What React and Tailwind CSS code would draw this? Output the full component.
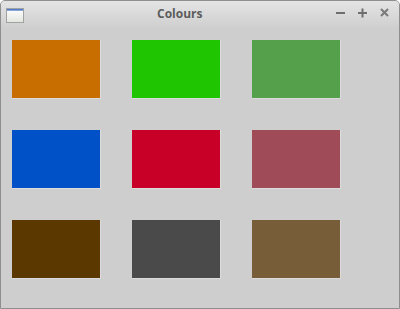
export default function App() {
  const colors = [
    "#c86e00", "#1ec500", "#55a04a",
    "#0050c8", "#c80028", "#a04b58",
    "#5a3800", "#4a4a4a", "#785e38",
  ];
  return (
    <div className="w-[400px] h-[309px] bg-[#cecece] border border-[#8e8e8e] rounded-t-[5px] overflow-hidden flex flex-col" style={{ fontFamily: '"Open Sans", "DejaVu Sans", sans-serif' }}>
      <div className="h-[27px] shrink-0 bg-gradient-to-b from-[#e4e4e4] to-[#cfcfcf] flex items-center relative">
        <div className="ml-[5px] mt-[1px] w-[18px] h-[15px] border border-[#a2a2a2] bg-gradient-to-b from-[#ffffff] to-[#e2e6e0] flex flex-col">
          <div className="h-[2px] bg-[#4f7cc8] border-b border-[#8aa6d8]"></div>
        </div>
        <div className="absolute left-[156px] top-[4px] text-[12px] font-bold text-[#5c5c5c]">Colours</div>
        <div className="absolute right-[9px] top-[6px] flex items-center gap-[11px] text-[#777]">
          <svg width="11" height="11" viewBox="0 0 11 11"><rect x="1" y="5" width="9" height="2" fill="#6e6e6e" /></svg>
          <svg width="11" height="11" viewBox="0 0 11 11"><rect x="1" y="5" width="9" height="2" fill="#6e6e6e" /><rect x="4.5" y="1.5" width="2" height="9" fill="#6e6e6e" /></svg>
          <svg width="11" height="11" viewBox="0 0 11 11"><path d="M2 2 L9 9 M9 2 L2 9" stroke="#7a7a7a" strokeWidth="2" /></svg>
        </div>
      </div>
      <div className="grid grid-cols-[89px_89px_89px] gap-x-[31px] gap-y-[31px] pl-[11px] pt-[12px]">
        {colors.map((c) => (
          <div key={c} className="w-[89px] h-[59px] border-r border-b border-[#dcdcdc]">
            <div className="w-[88px] h-[58px]" style={{ backgroundColor: c }}></div>
          </div>
        ))}
      </div>
    </div>
  );
}
